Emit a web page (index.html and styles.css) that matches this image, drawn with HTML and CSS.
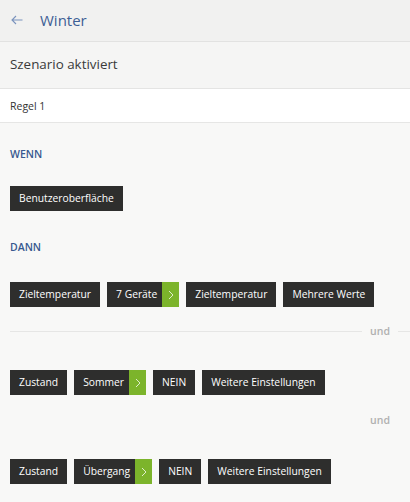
FILE: index.html
```html
<!DOCTYPE html>
<html lang="de">
<head>
<meta charset="utf-8">
<title>Winter</title>
<link rel="stylesheet" href="styles.css">
</head>
<body>
<header class="topbar">
  <svg class="back" width="12" height="10" viewBox="0 0 12 10"><path d="M11.5 5H1M5 1L1 5l4 4" fill="none" stroke="#7a93bd" stroke-width="1.1"/></svg>
  <span class="title">Winter</span>
</header>
<div class="status">Szenario aktiviert</div>
<div class="rule">Regel 1</div>
<main class="content">
  <div class="label label-wenn">WENN</div>
  <div class="row row-wenn"><span class="chip">Benutzeroberfläche</span></div>
  <div class="label label-dann">DANN</div>
  <div class="row row1">
    <span class="chip">Zieltemperatur</span>
    <span class="chip chip-go"><span class="txt">7 Geräte</span><span class="go"><svg width="6" height="10" viewBox="0 0 6 10"><path d="M1 1l4 4-4 4" fill="none" stroke="#dfeecb" stroke-width="1"/></svg></span></span>
    <span class="chip">Zieltemperatur</span>
    <span class="chip">Mehrere Werte</span>
  </div>
  <div class="und und-line"><span class="line"></span><span class="word">und</span><span class="line short"></span></div>
  <div class="row row2">
    <span class="chip">Zustand</span>
    <span class="chip chip-go"><span class="txt">Sommer</span><span class="go"><svg width="6" height="10" viewBox="0 0 6 10"><path d="M1 1l4 4-4 4" fill="none" stroke="#dfeecb" stroke-width="1"/></svg></span></span>
    <span class="chip">NEIN</span>
    <span class="chip">Weitere Einstellungen</span>
  </div>
  <div class="und und-plain"><span class="word">und</span></div>
  <div class="row row3">
    <span class="chip">Zustand</span>
    <span class="chip chip-go"><span class="txt">Übergang</span><span class="go"><svg width="6" height="10" viewBox="0 0 6 10"><path d="M1 1l4 4-4 4" fill="none" stroke="#dfeecb" stroke-width="1"/></svg></span></span>
    <span class="chip">NEIN</span>
    <span class="chip">Weitere Einstellungen</span>
  </div>
</main>
</body>
</html>
```
FILE: styles.css
```css
* { box-sizing: border-box; }
html, body { margin: 0; padding: 0; }
body {
  background: #f8f8f7;
  font-family: "Open Sans", "Liberation Sans", sans-serif;
  color: #333;
  width: 410px;
  height: 502px;
  overflow: hidden;
}
.topbar {
  height: 42px;
  background: #f1f1f0;
  border-bottom: 1px solid #e2e2e1;
  display: flex;
  align-items: center;
  padding-left: 11px;
}
.back { display: block; margin-top: -1px; }
.title {
  margin-left: 17px;
  font-size: 15px;
  color: #3e5f95;
  margin-top: -2px;
}
.status {
  height: 47px;
  background: #f5f5f4;
  border-bottom: 1px solid #e4e4e3;
  display: flex;
  align-items: center;
  padding-left: 10px;
  font-size: 13.4px;
  color: #3a3a3a;
  padding-bottom: 2px;
}
.rule {
  height: 34px;
  background: #fff;
  border-bottom: 1px solid #e6e6e5;
  display: flex;
  align-items: center;
  padding-left: 10px;
  font-size: 10.5px;
  color: #333;
}
.content { padding: 0 0 0 10px; }
.label {
  font-size: 10.5px;
  line-height: 16px;
  font-weight: 600;
  color: #37598f;
}
.label-wenn { margin-top: 23px; }
.row { display: flex; gap: 7px; }
.row-wenn { margin-top: 24px; }
.label-dann { margin-top: 28px; }
.row1 { margin-top: 27px; }
.row2 { margin-top: 31px; }
.row3 { margin-top: 31px; }
.chip {
  height: 25px;
  background: #2e2e2d;
  color: #fff;
  font-size: 10.3px;
  display: flex;
  align-items: center;
  padding: 0 9px 1px;
  white-space: nowrap;
}
.chip-go { padding: 0 0 0 9px; }
.chip-go .txt { padding-right: 5px; padding-bottom: 1px; }
.go {
  width: 17px;
  height: 25px;
  background: #7cb42b;
  display: flex;
  align-items: center;
  justify-content: center;
}
.go svg { display: block; }
.und {
  display: flex;
  align-items: center;
  height: 16px;
  font-size: 10.5px;
  font-weight: 600;
  color: #b0b0b0;
}
.und-line { margin-top: 16px; }
.und-plain { margin-top: 17px; justify-content: flex-end; padding-right: 20px; }
.und .line { flex: 1; height: 1px; background: #e6e6e5; }
.und .line.short { flex: 0 0 12px; }
.und-line .word { padding: 0 8px; }
```
